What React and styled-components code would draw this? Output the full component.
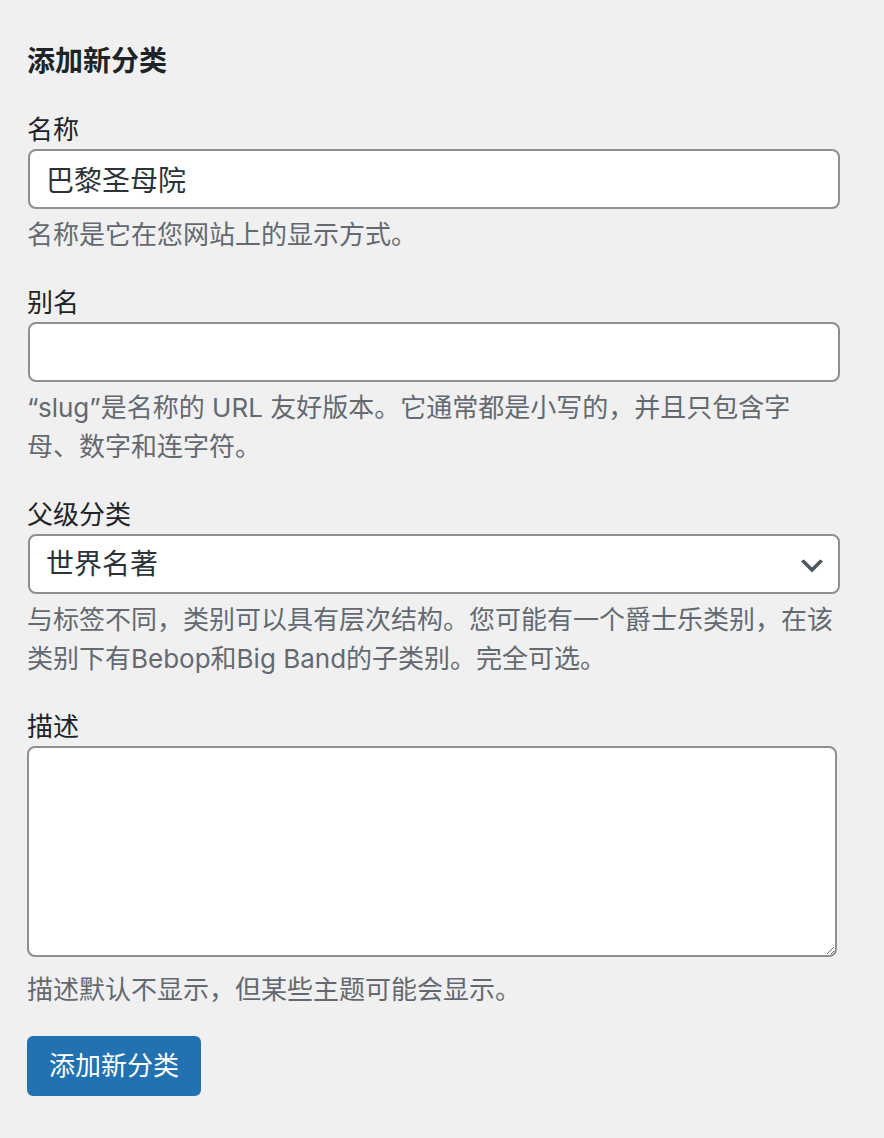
import React from 'react';
import styled, { createGlobalStyle, css } from 'styled-components';

const GlobalStyle = createGlobalStyle`
  html, body {
    margin: 0;
    padding: 0;
    background: #f0f0f1;
  }
  body {
    font-family: Inter, "Noto Sans CJK SC", sans-serif;
    color: #1d2327;
  }
  * {
    box-sizing: border-box;
  }
`;

const Page = styled.div`
  min-height: 1138px;
  padding: 42px 0 0 27px;
`;

const Form = styled.form`
  width: 813px;
`;

const Title = styled.h2`
  margin: 0 0 29px;
  font-size: 28px;
  line-height: 39px;
  font-weight: 600;
  color: #1d2327;
`;

const Field = styled.div`
  margin-bottom: ${(p) => (p.$last ? '27px' : '29px')};
`;

const Label = styled.label`
  display: block;
  font-size: 26px;
  line-height: 39px;
  color: #1d2327;
`;

const control = css`
  display: block;
  background: #fff;
  border: 2px solid #8c8f94;
  border-radius: 8px;
  font-family: inherit;
  color: #2c3338;
  outline: none;
  margin: 0;
`;

const TextInput = styled.input`
  ${control};
  width: 812px;
  height: 60px;
  margin-left: 1px;
  padding: 0 16px;
  font-size: 28px;
`;

const SelectWrap = styled.div`
  position: relative;
  width: 812px;
  margin-left: 1px;
`;

const Select = styled.select`
  ${control};
  appearance: none;
  width: 100%;
  height: 60px;
  padding: 0 64px 0 16px;
  font-size: 28px;
`;

const Chevron = styled.svg`
  position: absolute;
  right: 12px;
  top: 50%;
  transform: translateY(calc(-50% + 2px));
  pointer-events: none;
`;

const TextArea = styled.textarea`
  ${control};
  width: 810px;
  height: 211px;
  padding: 8px 16px;
  font-size: 28px;
  resize: vertical;
`;

const Help = styled.p`
  margin: ${(p) => (p.$wide ? '13px' : '6px')} 0 0;
  width: 808px;
  font-size: 26px;
  line-height: 39px;
  color: #646970;
`;

const Submit = styled.div`
  margin: 0;
`;

const Button = styled.button`
  display: inline-block;
  height: 60px;
  padding: 0 20px;
  border: 2px solid #2271b1;
  border-radius: 6px;
  background: #2271b1;
  color: #fff;
  font-family: inherit;
  font-size: 26px;
  line-height: 56px;
  cursor: pointer;
`;

export default function App() {
  return (
    <>
      <GlobalStyle />
      <Page>
        <Form onSubmit={(e) => e.preventDefault()}>
          <Title>添加新分类</Title>

          <Field>
            <Label htmlFor="tag-name">名称</Label>
            <TextInput id="tag-name" type="text" defaultValue="巴黎圣母院" />
            <Help>名称是它在您网站上的显示方式。</Help>
          </Field>

          <Field>
            <Label htmlFor="tag-slug">别名</Label>
            <TextInput id="tag-slug" type="text" defaultValue="" />
            <Help>“slug”是名称的 URL 友好版本。它通常都是小写的，并且只包含字母、数字和连字符。</Help>
          </Field>

          <Field>
            <Label htmlFor="parent">父级分类</Label>
            <SelectWrap>
              <Select id="parent" defaultValue="world">
                <option value="none">无</option>
                <option value="world">世界名著</option>
              </Select>
              <Chevron width="32" height="32" viewBox="0 0 20 20" aria-hidden="true">
                <path d="M5 6l5 5 5-5 2 1-7 7-7-7 2-1z" fill="#50575e" />
              </Chevron>
            </SelectWrap>
            <Help>与标签不同，类别可以具有层次结构。您可能有一个爵士乐类别，在该类别下有Bebop和Big Band的子类别。完全可选。</Help>
          </Field>

          <Field $last>
            <Label htmlFor="tag-description">描述</Label>
            <TextArea id="tag-description" rows={5} />
            <Help $wide>描述默认不显示，但某些主题可能会显示。</Help>
          </Field>

          <Submit>
            <Button type="submit">添加新分类</Button>
          </Submit>
        </Form>
      </Page>
    </>
  );
}
